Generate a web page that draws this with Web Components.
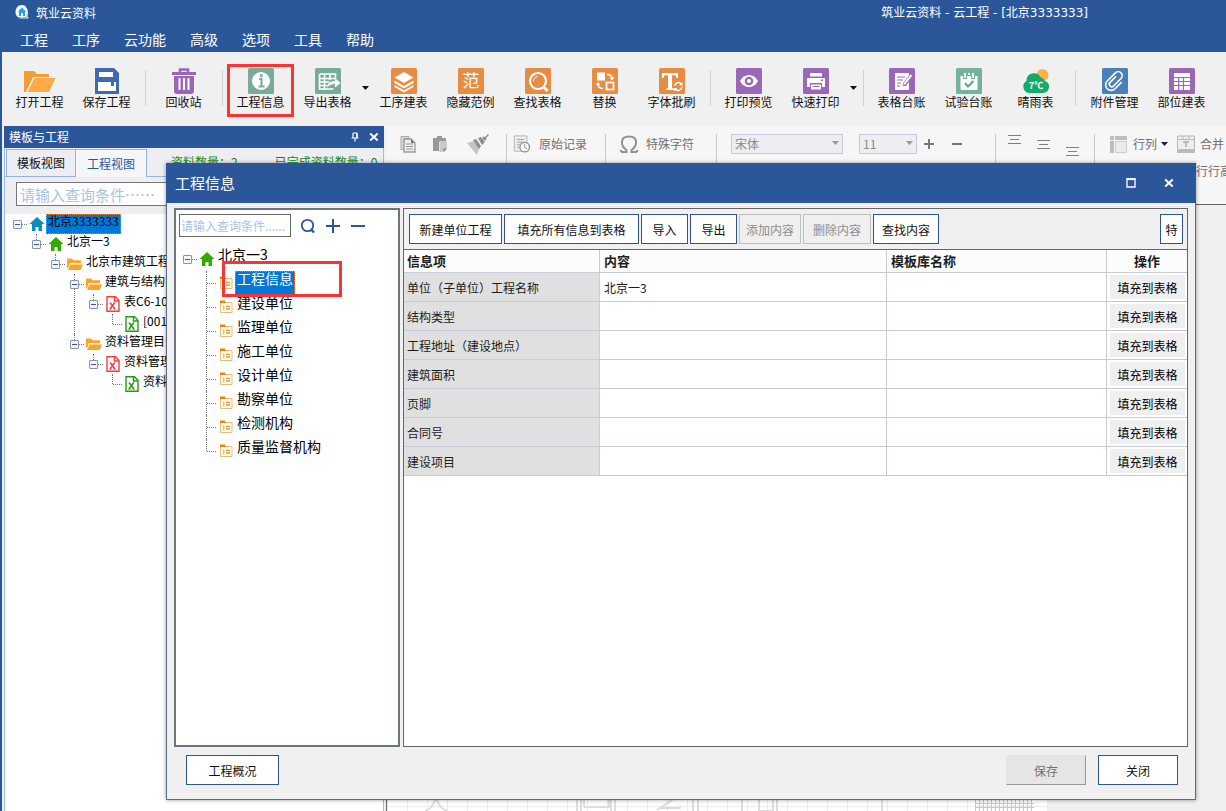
<!DOCTYPE html>
<html lang="zh-CN">
<head>
<meta charset="utf-8">
<title>筑业云资料</title>
<style>
html,body{margin:0;height:100%}
body{font:12px/16px "Noto Sans CJK SC",sans-serif;color:#111;background:#f0f0f0;overflow:hidden}
</style>
</head>
<body>
<cloud-app></cloud-app>
<script>
const G='#78ab98',O='#e68c43',P='#9867b8';
const tile=(c,s)=>`<svg viewBox="0 0 26 26"><rect width="26" height="26" rx="1.5" fill="${c}"/>${s}</svg>`;
const ICONS={
logo:`<svg viewBox="0 0 16 16"><path d="M8 1C4 1 1.500 4 1.500 8s3 6.500 6.500 6.500h5.500c1.200 0 1.500-1 .5-1.500-.8-.3-.8-.8-.5-1.500C15 6 12 1 8 1z" fill="#f4fbff"/><path d="M8 3.500 3.800 7.500H5V12h6V7.500h1.200z" fill="#19a5e8"/><path d="M7 9h2v3H7z" fill="#fff"/><path d="M4 13.500c3 .8 6 .5 9-.3" stroke="#48b6e9" fill="none"/></svg>`,
open:`<svg viewBox="0 0 32 26"><path d="M0 24V4q0-1 1-1h9l3 3h11q1 0 1 1v2H9L2 24z" fill="#f29c35"/><path d="M10.500 10H31.500L25 24H3.500z" fill="#ffab45"/></svg>`,
save:`<svg viewBox="0 0 26 26"><path d="M1 0h19l5 5v21H1z" fill="#4169b0"/><path d="M5 4h14v5H5zM4 14h18v9H4z" fill="#fff"/><rect x="17" y="14" width="3" height="4" fill="#4169b0"/></svg>`,
trash:`<svg viewBox="0 0 26 26"><path d="M1 4h24v3H1zM3 8h20v15q0 3-3 3H6q-3 0-3-3z" fill="${P}"/><path d="M9 4V1.500h8V4" fill="none" stroke="${P}" stroke-width="2.500"/><path d="M8.500 10v12M13 10v12M17.500 10v12" stroke="#fff" stroke-width="2"/></svg>`,
info:tile(G,`<circle cx="13" cy="13" r="9" fill="#fff"/><path d="M11 11h2.500v7M10.500 18.500h6" stroke="${G}" stroke-width="2" fill="none"/><circle cx="13.300" cy="7.500" r="1.600" fill="${G}"/>`),
export:tile(G,`<path d="M4.500 6h16v4M4.500 6v15h14M4.500 10.500h16M4.500 14h10M4.500 17.500h8M9.500 6v15M15 6v6" stroke="#fff" stroke-width="1.600" fill="none"/><path d="M12 20c1-5 3-7 8-7v-3l5.500 5-5.500 4.500V16c-4 0-6 1-8 4z" fill="#fff"/>`),
layers:tile(O,`<path d="M13 4l9.500 5.500L13 15 3.500 9.500zM3.500 12.500 13 18l9.500-5.500v2.500L13 20.500 3.500 15zM3.500 17 13 22.500 22.500 17v2L13 24.500 3.500 19z" fill="#fff"/>`),
fan:tile(O,`<text x="13" y="19" font-size="17" text-anchor="middle" fill="#fff">范</text>`),
find:tile(O,`<circle cx="13" cy="13" r="8" fill="none" stroke="#fff" stroke-width="2.200"/><path d="M18.500 19l4 4" stroke="#fff" stroke-width="2.800"/><path d="M8.500 13.500a4.500 4.500 0 0 1 4-5" stroke="#fff" fill="none"/>`),
swap:tile(O,`<rect x="5" y="4.500" width="8" height="8" fill="#fff"/><rect x="14.500" y="14.500" width="7" height="7" fill="none" stroke="#fff" stroke-width="1.700"/><path d="M15 6.500c3 0 5 1 5 4M6 15.500c0 3 1.500 5 5 5" fill="none" stroke="#fff" stroke-width="1.600"/><path d="M17.500 9.500h5l-2.500 3zM3.500 17 6 14l2.500 3z" fill="#fff"/>`),
font:tile(O,`<path d="M3 5h16v5h-1.500l-1-2.700h-3.500V20l2 .7V22H7v-1.300l2-.7V7.300H5.500L4.500 10H3z" fill="#fff"/><path d="M15.500 18a4 4 0 0 1 7-2M23 19a4 4 0 0 1-7 2" fill="none" stroke="#fff" stroke-width="1.500"/><path d="M23.500 14v3.500H20zM15 23.500V20h3.500z" fill="#fff"/>`),
eye:tile(P,`<path d="M4 13c4-8 14-8 18 0-4 8-14 8-18 0z" fill="#fff"/><circle cx="13" cy="13" r="4.300" fill="${P}"/><circle cx="13" cy="13" r="2" fill="#fff"/>`),
print:tile(P,`<path d="M7 5h12v3.500H7zM4 10h18v9h-3v-4H7v4H4z" fill="#fff"/><path d="M8 16.500h10v5H8z" fill="#fff"/><path d="M9.500 18.500h7" stroke="${P}"/><rect x="18" y="11.500" width="2" height="1.500" fill="${P}"/>`),
ledger:tile(P,`<path d="M6 5h14v3l-6 8v2h3l3-4v8H6z" fill="#fff"/><path d="M8 9h8M8 12h6M8 15h4M8 18h3" stroke="${P}" stroke-width="1.200"/><path d="M21.500 6l2 1.700-7 9-2.500 1 .5-2.700z" fill="#fff" stroke="${P}" stroke-width=".7"/>`),
test:tile('#72b39c',`<path d="M4.500 8H7v3h4V8h4v3h4V8h2.500v13q0 1-1 1h-15q-1 0-1-1z" fill="#fff"/><path d="M9 5v5M17 5v5M13 5v2" stroke="#fff" stroke-width="1.800"/><path d="M9 15l3 3.500 5.500-5.500" fill="none" stroke="#5aa68b" stroke-width="2"/>`),
weather:`<svg viewBox="0 0 26 26"><circle cx="19.500" cy="7" r="6" fill="#ffb046"/><path d="M6 25a6.500 6.500 0 0 1-2.500-12A7.500 7.500 0 0 1 17.500 9a7 7 0 0 1 4.500 4A6.200 6.200 0 0 1 20 25z" fill="#13ab67"/><text x="13" y="21" text-anchor="middle" font-size="9" font-weight="700" fill="#fff">7℃</text></svg>`,
clip:tile('#4a80b8',`<g transform="rotate(45 13 13)"><path d="M10.500 9v8.500a2.500 2.500 0 0 0 5 0V7a4 4 0 0 0-8 0v11.500a5.500 5.500 0 0 0 11 0V9" fill="none" stroke="#fff" stroke-width="1.600"/></g>`),
grid:tile(P,`<path d="M5 5h16v17H5z" fill="#fff"/><path d="M5 9.500h16M5 13.500h16M5 17.500h16M9.700 9v13M14.500 9v13" stroke="${P}" stroke-width="1.200"/>`),
pin:`<svg viewBox="0 0 10 10"><path d="M3 1h4v5M3 1v5M1.500 6h7M5 6v3.500" stroke="#fff" stroke-width="1.200" fill="none"/><path d="M6 1h1.500v5H6z" fill="#fff"/></svg>`,
x:`<svg viewBox="0 0 10 10"><path d="M1.200 1.500l7.500 7M8.700 1.500l-7.500 7" stroke="#fff" stroke-width="1.900"/></svg>`,
max:`<svg viewBox="0 0 10 10"><path d="M1 1h8v8H1z" fill="none" stroke="#fff" stroke-width="1.300"/><path d="M.5 1.200h9" stroke="#fff" stroke-width="1.800"/></svg>`,
homeb:`<svg viewBox="0 0 16 16"><path d="M8 1l7.500 7H13v7h-3.500v-4h-3v4H3V8H.5z" fill="#0b8cc4"/></svg>`,
homeg:`<svg viewBox="0 0 16 16"><path d="M8 1l7.500 7H13v7h-3.500v-4h-3v4H3V8H.5z" fill="#37a800"/></svg>`,
folder:`<svg viewBox="0 0 16 16"><path d="M0 3V2.500h5l1.500 1.700H14V7H3L1 12H0z" fill="#fda428"/><path d="M3.500 8.500H16L13.500 14H1z" fill="#fda428"/></svg>`,
xr:`<svg viewBox="0 0 16 16"><path d="M2 .8h8.500L14 4.300V15.200H2z" fill="#fff" stroke="#f53d43" stroke-width="1.400"/><path d="M9.500 1v4H14M5 6.500l5 6.500M9.700 6.500 5 13M4.500 13h2M8.500 13h2" stroke="#f53d43" stroke-width="1.500" fill="none"/></svg>`,
xg:`<svg viewBox="0 0 16 16"><path d="M2 .8h8.500L14 4.300V15.200H2z" fill="#fff" stroke="#269b12" stroke-width="1.400"/><path d="M9.500 1v4H14M5 6.500l5 6.500M9.700 6.500 5 13M4.500 13h2M8.500 13h2" stroke="#269b12" stroke-width="1.500" fill="none"/></svg>`,
form:`<svg viewBox="0 0 16 16"><path d="M2.500 3.500H14v10H2.500z" fill="#fffaf0" stroke="#e6bd78"/><path d="M2 1.500h5l1 2.500H2z" fill="#e08a00"/><path d="M5 7.500h1.500M8 7.500h4M5 10h1.500M8 10h4" stroke="#e3a038" stroke-width="1.300"/></svg>`,
lens:`<svg viewBox="0 0 16 16"><circle cx="7.500" cy="7.500" r="5.700" fill="none" stroke="#2b579a" stroke-width="1.800"/><path d="M11 11.500l3 3" stroke="#2b579a" stroke-width="2.400"/></svg>`,
plus:`<svg viewBox="0 0 16 16"><path d="M1 8h14M8 1v14" stroke="currentColor" stroke-width="2"/></svg>`,
plusb:`<svg viewBox="0 0 12 12"><path d="M1 6h10M6 1v10" stroke="currentColor" stroke-width="2"/></svg>`,
minusb:`<svg viewBox="0 0 12 12"><path d="M1 6h10" stroke="currentColor" stroke-width="2"/></svg>`,
minus:`<svg viewBox="0 0 16 16"><path d="M1 8h14" stroke="currentColor" stroke-width="2"/></svg>`,
copy:`<svg viewBox="0 0 18 18"><path d="M2 1.500h8v2H5v11H2z" fill="#ddd" stroke="#aaa"/><path d="M5 4h7l4 4v9H5z" fill="#eee" stroke="#999" stroke-width="1.300"/><path d="M12 4v4h4z" fill="#777"/><path d="M7 9h7M7 11.500h7M7 14h7" stroke="#999"/></svg>`,
paste:`<svg viewBox="0 0 18 18"><path d="M2 3h4V1h5v2h4v4H8v9H2z" fill="#999"/><path d="M8.500 6H16v8l-3 3H8.500z" fill="#c9c9c9"/><path d="M16 13.500h-3.500V17z" fill="#888"/></svg>`,
brush:`<svg viewBox="0 0 22 22"><path d="M0 10l7-2 6 5-3 9z" fill="#c4c4c4"/><path d="M6 7l3-1 5 7-2 3zM11 5l3-1 4 5-3 3z" fill="#8f8f8f"/><path d="M16 3.500l2 .5 3-3 1 1-3 3 .5 2-2 .5-2-2z" fill="#8f8f8f"/></svg>`,
record:`<svg viewBox="0 0 19 20"><path d="M1 1h14v17H1z" fill="#eee" stroke="#b0b0b0"/><path d="M4 5h8M4 8h7M4 11h3M4 14h2" stroke="#999"/><circle cx="12.500" cy="13.500" r="5.300" fill="#f7f7f7" stroke="#909090" stroke-width="1.500"/><path d="M12.500 10.500v3.500l2.500 1.500" stroke="#888" fill="none"/></svg>`,
omega:`<svg viewBox="0 0 18 18"><path d="M1 17h5.500v-2C.5 11-.5 1.500 9 1.500S17.500 11 11.500 15v2H17M1 17v-2M17 17v-2" fill="none" stroke="#929292" stroke-width="2"/></svg>`,
lines:`<svg viewBox="0 0 13 9"><path d="M0 .5h13M2 4.500h9M0 8.500h13" stroke="#808080"/></svg>`,
rowcol:`<svg viewBox="0 0 18 18"><path d="M1 1h4v4H1zM6 1h12v4H6zM1 6h4v12H1z" fill="#bdbdbd"/><path d="M6.500 6.500h11v11h-11z" fill="#ebebeb" stroke="#ccc"/></svg>`,
merge:`<svg viewBox="0 0 18 18"><path d="M.5 1h17v16H.5z" fill="#eee" stroke="#b5b5b5"/><path d="M0 14h18v4H0z" fill="#bbb"/><path d="M0 4.500h18M6 1v3M12 1v3" stroke="#bbb"/><path d="M6 7h6M9 7v5" stroke="#aaa" stroke-width="1.500"/></svg>`,
down:`<svg viewBox="0 0 7 4"><path d="M0 0h7L3.500 4z" fill="currentColor"/></svg>`
};
const RESET=`*,::before,::after{box-sizing:border-box}button,input,select{font:inherit;color:inherit;margin:0;padding:0;border:0;border-radius:0;background:none}`;
function define(name,html,after){
  const t=document.createElement('template');
  t.innerHTML=html.replace('<style>','<style>'+RESET);
  customElements.define(name,class extends HTMLElement{
    constructor(){super();this.attachShadow({mode:'open'}).append(t.content.cloneNode(true));}
    connectedCallback(){after&&after.call(this,this.shadowRoot);}
  });
}
customElements.define('ui-icon',class extends HTMLElement{
  static observedAttributes=['name'];
  constructor(){super();this.attachShadow({mode:'open'});}
  attributeChangedCallback(attr,old,value){this.shadowRoot.innerHTML=`<style>:host{display:block;flex:none;width:16px;height:16px}svg{display:block;width:100%;height:100%}</style>${ICONS[value]||''}`;}
});
define('tool-button',`<style>
:host{display:block;flex:none;width:67px;height:53px}
button{width:100%;height:100%;display:flex;flex-direction:column;align-items:center;padding-top:4px;white-space:nowrap;line-height:16px}
:host([marked]) button{outline:3px solid #fa3434;outline-offset:-3px}
ui-icon{width:26px;height:26px}
:host([icon=open]) ui-icon{width:32px}
</style><button type="button"><ui-icon></ui-icon><slot></slot></button>`,function(r){r.querySelector('ui-icon').setAttribute('name',this.getAttribute('icon'));});
define('tool-sep',`<style>:host{display:flex;flex:none;width:10px;height:36px;margin-top:6px;justify-content:center}i{width:1px;background:#d0d0d0}</style><i></i>`);
define('drop-arrow',`<style>:host{display:flex;flex:none;width:9px;justify-content:center;align-items:center}button{display:block}ui-icon{width:7px;height:4px}</style><button type="button" aria-label="展开"><ui-icon name="down"></ui-icon></button>`);

define('app-header',`<style>
:host{display:block;flex:none;background:#2b579a;color:#fff}
.t{height:26px;display:flex;align-items:center;padding-left:14px;gap:6px}
.t ui-icon{margin-bottom:2px}
.c{margin-left:auto;padding-right:138px;font-family:"DejaVu Sans","Noto Sans CJK SC",sans-serif}
nav{height:26px;display:flex;gap:24px;padding:2px 0 0 20px;font-size:14px;line-height:22px}
button{display:block;height:22px}
</style><div class="t"><ui-icon name="logo"></ui-icon><span>筑业云资料</span><span class="c">筑业云资料 - 云工程 - [北京3333333]</span></div>
<nav><button>工程</button><button>工序</button><button>云功能</button><button>高级</button><button>选项</button><button>工具</button><button>帮助</button></nav>`);

define('main-toolbar',`<style>
:host{display:flex;flex:none;height:72px;padding:12px 0 0 4px;overflow:hidden;background:#f0f0f0}
drop-arrow{height:47px}.w{width:12px}
</style>
<tool-button icon="open">打开工程</tool-button><tool-button icon="save">保存工程</tool-button><tool-sep></tool-sep>
<tool-button icon="trash">回收站</tool-button><tool-sep></tool-sep>
<tool-button icon="info" marked>工程信息</tool-button><tool-button icon="export">导出表格</tool-button><drop-arrow></drop-arrow>
<tool-button icon="layers">工序建表</tool-button><tool-button icon="fan">隐藏范例</tool-button><tool-button icon="find">查找表格</tool-button><tool-button icon="swap">替换</tool-button><tool-button icon="font">字体批刷</tool-button><tool-sep></tool-sep>
<tool-button icon="eye">打印预览</tool-button><tool-button icon="print">快速打印</tool-button><drop-arrow></drop-arrow><tool-sep></tool-sep>
<tool-button icon="ledger">表格台账</tool-button><tool-button icon="test">试验台账</tool-button><tool-button icon="weather">晴雨表</tool-button><tool-sep class="w"></tool-sep>
<tool-button icon="clip">附件管理</tool-button><tool-button icon="grid">部位建表</tool-button>`);

define('tree-item',`<style>
:host{display:block;position:relative;--mid:calc(var(--row)/2)}
:host(:not([root]))::before{content:"";position:absolute;left:9px;top:0;bottom:0;border-left:1px dotted #777}
:host([last])::before{bottom:auto!important;height:var(--mid)}
.row{display:flex;align-items:center;height:var(--row);position:relative}
.e{flex:none;width:19px;height:100%;display:flex;align-items:center;justify-content:center;position:relative}
.e::before{content:"";position:absolute;left:10px;right:0;top:var(--mid);border-top:1px dotted #777}
button{width:9px;height:9px;border:1px solid #8a94a0;border-radius:1px;background:#f4f4f4;position:relative;display:flex;align-items:center;justify-content:center}
button::before{content:"";width:5px;height:1px;background:#2f55b8}
:host([leaf]) button{display:none}
.i{width:19px;flex:none;display:flex;justify-content:center}
.l{height:100%;padding:0 2px;white-space:nowrap;line-height:var(--text);color:#000}
:host([selected]) .l{background:#0078d7;outline:1px dotted #f58220;outline-offset:-1px}
:host([light]) .l{color:#fff}
.kids{margin-left:19px}
:host([marked]) .row::after{content:"";position:absolute;z-index:1;left:25px;top:-10px;width:120px;height:36px;border:3px solid #fa3434}
</style><div class="row"><span class="e"><button type="button" aria-label="折叠"></button></span><span class="i"><ui-icon></ui-icon></span><span class="l"></span></div><div class="kids"><slot></slot></div>`,function(r){
  r.querySelector('ui-icon').setAttribute('name',this.getAttribute('icon'));
  r.querySelector('.l').textContent=this.getAttribute('label');
});

define('dock-pane',`<style>
:host{display:flex;flex-direction:column;flex:none;width:380px;margin:2px 0 0 2px;border:1px solid #9dbce8;border-width:0 1px;background:#ededf2}
header{height:22px;flex:none;background:#2b579a;color:#fff;display:flex;align-items:center;gap:9px;padding:0 5px;margin:0 -1px}
header span{flex:1}header ui-icon{width:10px;height:10px}
header button{display:block}
.tabs{display:flex;flex:none;height:28px;margin-top:1px;padding-left:1px;white-space:nowrap;border-bottom:1px solid #92b4ea}
.tabs button{height:27px;width:70px;border:1px solid #92b4ea;border-bottom:0}
.tabs button+button{width:72px;height:28px;margin-left:-1px;background:#f5f6fa;color:#2b579a}
.tabs span{color:#128a12;margin:5px 0 0 24px}
.tabs span+span{margin-left:37px}
.s{padding:5px 8px 8px 11px;flex:none}
input{display:block;width:100%;height:24px;border:1px solid #777;background:#fff;font-size:15px;padding:0 3px}
input::placeholder{color:#a9c3e4;opacity:1}
.tree{flex:1;background:#fff;padding-left:3px;--row:20px;--text:14px}
</style><header><span>模板与工程</span><button aria-label="固定"><ui-icon name="pin"></ui-icon></button><button aria-label="关闭面板"><ui-icon name="x"></ui-icon></button></header>
<div class="tabs"><button>模板视图</button><button>工程视图</button><span>资料数量：2</span><span>已完成资料数量：0</span></div>
<div class="s"><input aria-label="查询" placeholder="请输入查询条件⋯⋯"></div>
<div class="tree"><tree-item root selected icon="homeb" label="北京3333333"><tree-item last icon="homeg" label="北京一3"><tree-item last icon="folder" label="北京市建筑工程">
<tree-item icon="folder" label="建筑与结构"><tree-item last icon="xr" label="表C6-10"><tree-item last leaf icon="xg" label="[001"></tree-item></tree-item></tree-item>
<tree-item last icon="folder" label="资料管理目录"><tree-item last icon="xr" label="资料管理"><tree-item last leaf icon="xg" label="资料"></tree-item></tree-item></tree-item>
</tree-item></tree-item></tree-item></div>`);

define('format-bar',`<style>
:host{display:block;flex:none;height:79px;background:#f6f6f7;border-bottom:1px solid #666;color:#707070;overflow:hidden;white-space:nowrap}
.r{display:flex;align-items:center;height:36px;padding-left:13px}
.r>*{flex:none}
button{display:flex;align-items:center;gap:8px}
i{width:1px;height:36px;margin-top:15px;background:#c8c8c8}
.a{width:18px;height:18px}.b{width:22px;height:22px}
.sel{position:relative;height:20px}
select{appearance:none;height:20px;width:100%;border:1px solid #c9c9dc;background:#ededf2;padding-left:3px;color:#8a8a8a;opacity:1;display:block}
.sel ui-icon{position:absolute;right:4px;top:7px;width:7px;height:4px;color:#9a9a9a}
.p{width:12px;height:12px;color:#777}
.al{width:13px;height:9px}.al.t{align-self:flex-start;margin-top:9px}.al.d{align-self:flex-end;margin-bottom:6px}
.q{height:20px;display:flex;justify-content:flex-end}
.q span{width:30px;line-height:18px}
drop-arrow{color:#222}
</style><div class="r">
<button aria-label="复制"><ui-icon class="a" name="copy"></ui-icon></button>
<button aria-label="粘贴" style="margin-left:14px"><ui-icon class="a" name="paste"></ui-icon></button>
<button aria-label="格式刷" style="margin-left:18px"><ui-icon class="b" name="brush"></ui-icon></button>
<i style="margin-left:17px"></i><button style="margin-left:6px"><ui-icon class="a" name="record"></ui-icon>原始记录</button>
<i style="margin-left:18px"></i><button style="margin-left:14px"><ui-icon class="a" name="omega"></ui-icon>特殊字符</button>
<i style="margin-left:22px"></i>
<div class="sel" style="margin-left:14px;width:112px"><select aria-label="字体" disabled><option>宋体</option></select><ui-icon name="down"></ui-icon></div>
<div class="sel" style="margin-left:16px;width:58px"><select aria-label="字号" disabled><option>11</option></select><ui-icon name="down"></ui-icon></div>
<button aria-label="增大" style="margin-left:6px"><ui-icon class="p" name="plusb"></ui-icon></button>
<button aria-label="减小" style="margin-left:16px"><ui-icon class="p" name="minusb"></ui-icon></button>
<i style="margin-left:32px"></i>
<ui-icon class="al t" name="lines" style="margin-left:12px"></ui-icon><ui-icon class="al" name="lines" style="margin-left:16px"></ui-icon><ui-icon class="al d" name="lines" style="margin-left:16px"></ui-icon>
<i style="margin-left:15px"></i><button style="margin-left:14px;gap:6px"><ui-icon class="a" name="rowcol"></ui-icon>行列</button><drop-arrow style="margin-left:3px"></drop-arrow>
<button style="margin-left:8px;gap:5px"><ui-icon class="a" name="merge"></ui-icon>合并</button>
</div><div class="q"><span>行行高</span></div>`);

define('sheet-area',`<style>
:host{display:flex;flex:1;align-items:flex-end;background:#efefef;border-left:1px solid #666;min-height:0}
svg{display:block;width:660px;height:100px;background:#fff}
</style><svg viewBox="0 0 660 100"><defs><pattern id="g" width="20" height="20" patternUnits="userSpaceOnUse"><path d="M0 15.500h20M.5 0v20" stroke="#ececec"/></pattern><pattern id="h" width="4" height="4" patternUnits="userSpaceOnUse"><path d="M0 .5h4M.5 0v4" stroke="#c9c9c9"/></pattern></defs><rect width="660" height="100" fill="url(#g)"/><g fill="none" stroke="#ddd" stroke-width="2"><path d="M38 100q10-4 11-16M60 100q-10-4-11-16M190 86v14M194 86v14M224 86v14M228 86v14M197 96h25v-8M197 96v-8M270 99l18-12M274 97h20M306 86v14M311 86v14M355 86v14M372 88h14v12h-14zM390 86v14M495 86v14"/></g><rect x="588" y="80" width="59" height="20" fill="url(#h)"/></svg>`);

define('box-button',`<style>
:host{display:block;flex:none}
button{width:100%;height:30px;padding-top:1px;border:1px solid #2b579a;background:#fff;white-space:nowrap;color:#111}
:host([off]) button{border-color:#bfbfbf;background:#efefef;color:#8d8d8d}
:host([flat]) button{border-color:#e5e5e5 #999 #999 #e5e5e5;background:#e5e5e5;color:#707070}
</style><button type="button"><slot></slot></button>`,function(r){if(this.hasAttribute('off')||this.hasAttribute('flat'))r.querySelector('button').disabled=true;});

define('info-table',`<style>
:host{display:block}
table{width:100%;border-collapse:separate;border-spacing:0;table-layout:fixed}
th,td{border:0 solid #c9c9dc;border-width:0 1px 1px 0;padding:2px 4px 0;text-align:left;font-weight:400;color:#1c1c1c}
tr>:last-child{border-right:0}
thead th{height:23px;padding-top:0;font-size:13px;font-weight:700;background:#fcfcfc}
thead th:first-child,tbody th{padding-left:3px}
thead th:last-child{text-align:center}
tbody th{background:#e0e0e0}
tbody td,tbody th{height:29px}
tbody td:last-child{padding:0 2px 0 3px}
td button{display:block;width:100%;height:24px;padding-top:2px;background:#efefef;color:#000}
</style><table><colgroup><col style="width:196px"><col><col style="width:220px"><col style="width:80px"></colgroup><thead><tr><th>信息项</th><th>内容</th><th>模板库名称</th><th>操作</th></tr></thead><tbody></tbody></table>`,function(r){
  const rows=[['单位（子单位）工程名称','北京一3'],['结构类型',''],['工程地址（建设地点）',''],['建筑面积',''],['页脚',''],['合同号',''],['建设项目','']];
  r.querySelector('tbody').innerHTML=rows.map(([a,b])=>`<tr><th scope="row">${a}</th><td>${b}</td><td></td><td><button type="button">填充到表格</button></td></tr>`).join('');
});

define('project-dialog',`<style>
:host{display:flex;flex-direction:column;position:absolute;left:166px;top:163px;right:30px;bottom:11px;background:#f0f0f0;border:1px solid #5c6c80;border-top:0;box-shadow:0 0 4px rgba(0,0,0,.4)}
header{flex:none;height:40px;margin:0 -1px;background:#2b579a;color:#fff;font-size:15px;line-height:40px;display:flex;align-items:center;padding:0 22px 0 9px;gap:28px}
header span{flex:1}header ui-icon{width:10px;height:10px}header button{display:block}
main{flex:1;display:grid;grid-template-columns:226px 1fr;gap:3px;padding:5px 7px 0;min-height:0}
.l{border:2px solid #6b7680;background:#fff;padding:4px 2px;min-height:0}
.s{display:flex;align-items:center;gap:9px;padding-left:1px;color:#2b579a}
.s input{width:112px;height:23px;border:1px solid #666;padding:0 1px}
.s input::placeholder{color:#a9c3e4;opacity:1}
.s button{display:block}
.tree{--row:24px;--text:15px;font-size:14px;padding-top:10px}
.r{border:1px solid #666;background:#fff;min-width:0}
.tb{display:flex;gap:2px;height:41px;padding:5px 4px 0 5px;background:#f0f0f0;border-bottom:1px solid #666}
.m{margin-left:auto}
footer{flex:none;height:52px;display:flex;padding:8px 17px 0 19px;gap:12px}
</style><header><span>工程信息</span><button aria-label="最大化"><ui-icon name="max"></ui-icon></button><button aria-label="关闭窗口"><ui-icon name="x"></ui-icon></button></header>
<main><section class="l"><div class="s"><input aria-label="查询条件" placeholder="请输入查询条件......"><button aria-label="查询"><ui-icon name="lens"></ui-icon></button><button aria-label="添加"><ui-icon name="plus"></ui-icon></button><button aria-label="移除"><ui-icon name="minus"></ui-icon></button></div>
<div class="tree"><tree-item root icon="homeg" label="北京一3"><tree-item leaf selected light marked icon="form" label="工程信息"></tree-item><tree-item leaf icon="form" label="建设单位"></tree-item><tree-item leaf icon="form" label="监理单位"></tree-item><tree-item leaf icon="form" label="施工单位"></tree-item><tree-item leaf icon="form" label="设计单位"></tree-item><tree-item leaf icon="form" label="勘察单位"></tree-item><tree-item leaf icon="form" label="检测机构"></tree-item><tree-item leaf last icon="form" label="质量监督机构"></tree-item></tree-item></div></section>
<section class="r"><div class="tb"><box-button style="width:93px">新建单位工程</box-button><box-button style="width:135px">填充所有信息到表格</box-button><box-button style="width:47px">导入</box-button><box-button style="width:47px">导出</box-button><box-button off style="width:62px">添加内容</box-button><box-button off style="width:68px">删除内容</box-button><box-button style="width:66px">查找内容</box-button><box-button class="m" style="width:23px">特</box-button></div><info-table></info-table></section></main>
<footer><box-button style="width:93px">工程概况</box-button><box-button class="m" flat style="width:80px">保存</box-button><box-button style="width:80px">关闭</box-button></footer>`);

define('cloud-app',`<style>
:host{display:flex;flex-direction:column;height:100vh;position:relative;overflow:hidden}
.b{flex:1;display:flex;flex-direction:column;min-height:0;border-left:2px solid #2b579a}
.w{flex:1;display:flex;min-height:0}
.c{flex:1;display:flex;flex-direction:column;min-width:0;margin:2px 0 0 2px}
</style><app-header></app-header><div class="b"><main-toolbar></main-toolbar><div class="w"><dock-pane></dock-pane><div class="c"><format-bar></format-bar><sheet-area></sheet-area></div></div></div><project-dialog></project-dialog>`);
</script>
</body>
</html>
